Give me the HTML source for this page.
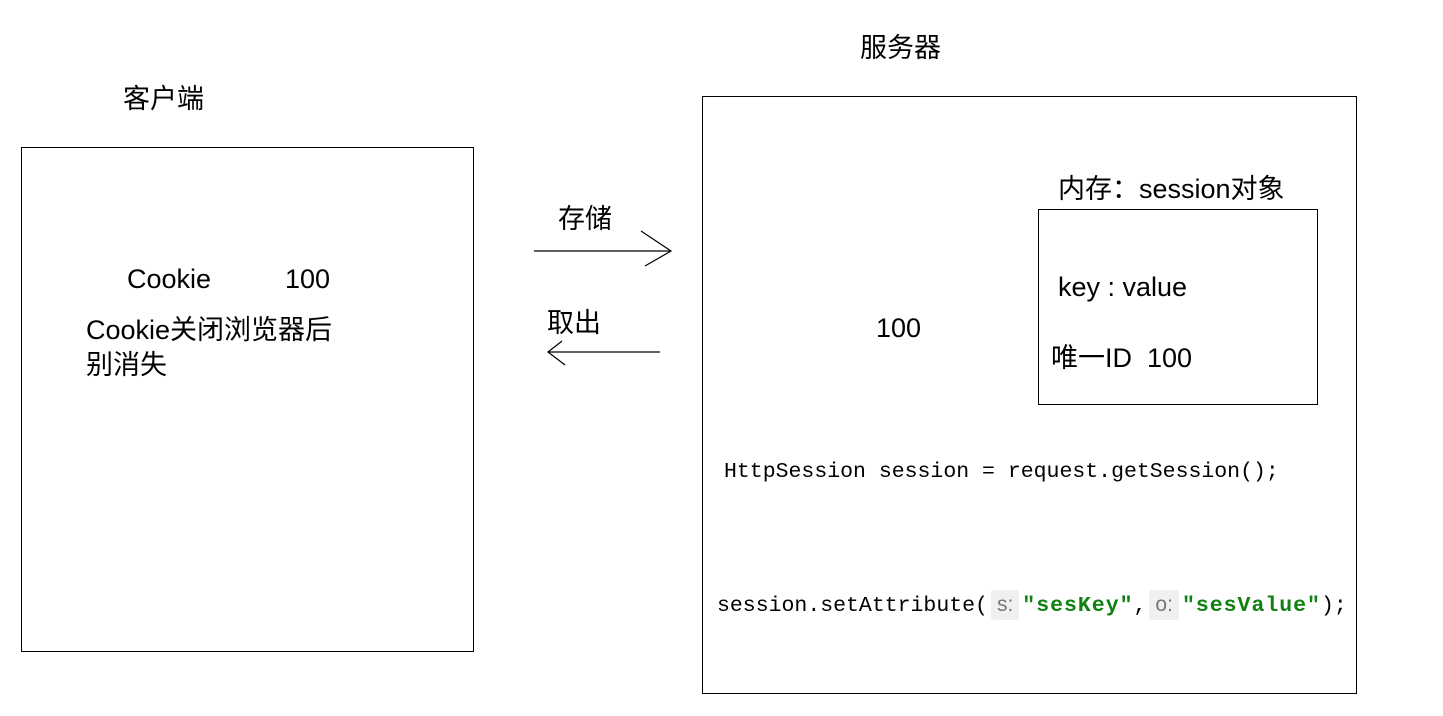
<!DOCTYPE html>
<html><head><meta charset="utf-8"><style>
body{margin:0;width:1443px;height:716px;background:#fff;position:relative;overflow:hidden;font-family:"Liberation Sans","Noto Sans CJK SC",sans-serif;color:#000}
.a{position:absolute;white-space:nowrap}
.box{position:absolute;border:1px solid #000;box-sizing:border-box}
.t{font-size:27px}
.code{font-family:"Liberation Mono",monospace;font-size:21.5px;letter-spacing:0}
.g{color:#108010;font-weight:bold;letter-spacing:1px}
.h{display:inline-block;background:#f0f0f0;color:#777;font-family:"Liberation Sans",sans-serif;font-size:21px;padding:0 6px;border-radius:3px;margin:0 3px;line-height:30px}
</style></head><body>
<div class="a t" style="left:123px;top:77px">客户端</div>
<div class="a t" style="left:860px;top:26px">服务器</div>
<div class="box" style="left:21px;top:147px;width:453px;height:505px"></div>
<div class="box" style="left:702px;top:96px;width:655px;height:598px"></div>
<div class="box" style="left:1038px;top:209px;width:280px;height:196px"></div>
<div class="a t" style="left:127px;top:264px">Cookie</div>
<div class="a t" style="left:285px;top:264px">100</div>
<div class="a t" style="left:86px;top:308px">Cookie关闭浏览器后</div>
<div class="a t" style="left:86px;top:343px">别消失</div>
<div class="a t" style="left:558px;top:197px">存储</div>
<div class="a t" style="left:547px;top:301px">取出</div>
<svg class="a" style="left:0;top:0" width="1443" height="716">
<g stroke="#000" stroke-width="1.2" fill="none">
<line x1="534" y1="251" x2="671" y2="251"/><path d="M641 231 L671 251 L645 266"/>
<line x1="548" y1="352" x2="660" y2="352"/><path d="M562 341 L548 352 L565 365"/>
</g></svg>
<div class="a t" style="left:876px;top:313px">100</div>
<div class="a t" style="left:1058px;top:167px">内存：session对象</div>
<div class="a t" style="left:1058px;top:272px">key : value</div>
<div class="a t" style="left:1051px;top:336px">唯一ID&nbsp;&nbsp;100</div>
<div class="a code" style="left:724px;top:460px">HttpSession session = request.getSession();</div>
<div class="a code" style="left:717px;top:590px">session.setAttribute(<span class="h">s:</span><span class="g">"sesKey"</span>,<span class="h">o:</span><span class="g">"sesValue"</span>);</div>
</body></html>
